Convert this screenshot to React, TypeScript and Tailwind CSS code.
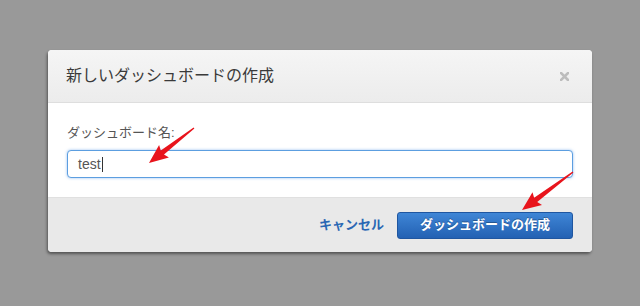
const font = { fontFamily: '"Liberation Sans", "Noto Sans CJK JP", sans-serif' }

function arrowPoints(tx: number, ty: number, hx: number, hy: number) {
  const len = Math.hypot(hx - tx, hy - ty)
  const dx = (hx - tx) / len
  const dy = (hy - ty) / len
  const nx = -dy
  const ny = dx
  const headLen = 17
  const bx = hx - dx * headLen
  const by = hy - dy * headLen
  const p = (x: number, y: number) => `${x.toFixed(1)},${y.toFixed(1)}`
  return [
    p(tx + nx * 0.6, ty + ny * 0.6),
    p(bx + nx * 2.6, by + ny * 2.6),
    p(bx - dx * 2 + nx * 8, by - dy * 2 + ny * 8),
    p(hx, hy),
    p(bx - dx * 2 - nx * 8, by - dy * 2 - ny * 8),
    p(bx - nx * 2.6, by - ny * 2.6),
    p(tx - nx * 0.6, ty - ny * 0.6),
  ].join(' ')
}

/** Modal for creating a dashboard, with callout arrows drawn on top. */
export default function App() {
  return (
    <div className="relative h-[306px] w-[640px] overflow-hidden bg-[#999999]" style={font}>
      <div className="pt-[50px] pl-[48px]">
        <div className="w-[544px] overflow-hidden rounded-[4px] bg-white shadow-[-1px_2px_3px_rgba(0,0,0,0.45)]">
          <div className="flex h-[53px] items-center justify-between border-b border-[#dedede] bg-gradient-to-b from-[#f5f5f5] to-[#ececec] pl-[18px] pr-[23px]">
            <h2 className="text-[16px] text-[#3a3a3a]">新しいダッシュボードの作成</h2>
            <svg width="9" height="9" viewBox="0 0 9 9" aria-hidden="true">
              <path d="M1 1L8 8M8 1L1 8" stroke="#bdbdbd" strokeWidth="2.6" strokeLinecap="square" />
            </svg>
          </div>
          <div className="px-[19px] pt-[20px] pb-[19px]">
            <label className="mb-[8px] block text-[13px] leading-[19px] text-[#555]">ダッシュボード名:</label>
            <div className="flex h-[28px] w-[506px] items-center rounded-[4px] border border-[#5c9ee0] bg-white pl-[10px] shadow-[0_0_3px_rgba(82,150,230,0.6)]">
              <span className="text-[14px] text-[#555]">test</span>
              <span className="ml-px h-[15px] w-px bg-[#333]" />
            </div>
          </div>
          <div className="flex h-[55px] items-center justify-end gap-[13px] border-t border-[#e0e0e0] bg-[#e9e9e9] pr-[19px]">
            <button type="button" className="text-[13px] font-bold text-[#2a67b4]">キャンセル</button>
            <button
              type="button"
              className="flex h-[27px] w-[176px] items-center justify-center rounded-[3px] border border-[#1f56a0] bg-gradient-to-b from-[#3f86d6] to-[#2361b3] text-[13px] font-bold text-white [text-shadow:0_-1px_0_rgba(0,0,0,0.3)]"
            >
              ダッシュボードの作成
            </button>
          </div>
        </div>
      </div>
      <svg className="pointer-events-none absolute inset-0" width="640" height="306">
        <polygon points={arrowPoints(194, 128, 149, 163)} fill="#e8141c" />
        <polygon points={arrowPoints(573, 172, 522, 210)} fill="#e8141c" />
      </svg>
    </div>
  )
}
